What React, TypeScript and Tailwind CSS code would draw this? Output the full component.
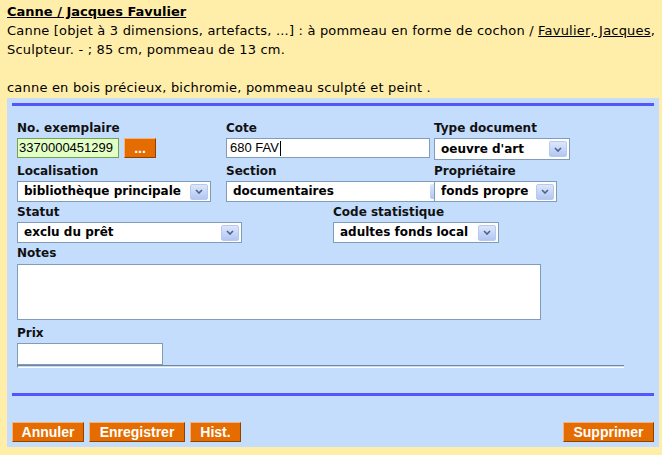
import React from 'react';

function Chevron() {
    return (
        <svg width="8" height="5" viewBox="0 0 8 5">
            <polyline points="1,1 4,4 7,1" fill="none" stroke="#4d6185" strokeWidth="1.6" />
        </svg>
    );
}

function ArrowBox() {
    return (
        <div className="w-[18px] h-[16px] rounded-[2px] border border-[#b9c9ee] bg-gradient-to-b from-[#dce7fd] to-[#b3c6f3] flex items-center justify-center">
            <Chevron />
        </div>
    );
}

function Select({ value, cls }: { value: string; cls: string }) {
    return (
        <div className={`${cls} bg-white border border-[#7f9db9] flex items-center justify-between pl-[6px] pr-[2px]`}>
            <span className="font-bold text-[12px] text-black whitespace-nowrap">{value}</span>
            <ArrowBox />
        </div>
    );
}

function Label({ children, cls = 'h-[20px] leading-[20px]' }: { children: React.ReactNode; cls?: string }) {
    return <div className={`${cls} font-bold text-[12px] text-[#111] whitespace-nowrap`}>{children}</div>;
}

function OrangeButton({ children, cls }: { children: React.ReactNode; cls: string }) {
    return (
        <button className={`${cls} h-[20px] bg-[#e46c00] border border-t-[#f5b27a] border-l-[#f5b27a] border-b-[#8c4200] border-r-[#8c4200] text-white font-bold text-[14px] leading-[18px] font-['Liberation_Sans',Arial,sans-serif] flex items-center justify-center`}>
            {children}
        </button>
    );
}

export default function App() {
    return (
        <div className="w-[662px] h-[455px] bg-[#ffeeaa] px-[7px] pt-[3px] font-['DejaVu_Sans',Verdana,sans-serif] text-[12px] leading-[19px] text-black overflow-hidden">
            {/* Notice */}
            <div className="whitespace-nowrap text-[13px] tracking-[0.2px] -mt-[1px]">
                <div className="font-bold underline tracking-normal">Canne / Jacques Favulier</div>
                <div>Canne [objet à 3 dimensions, artefacts, ...] : à pommeau en forme de cochon / <span className="underline">Favulier, Jacques</span>,</div>
                <div>Sculpteur. - ; 85 cm, pommeau de 13 cm.</div>
                <div className="h-[19px]"></div>
                <div>canne en bois précieux, bichromie, pommeau sculpté et peint .</div>
            </div>

            {/* Form panel */}
            <div className="w-[652px] h-[349px] bg-[#c5ddfd] pt-[5px] px-[5px] mt-[1px]">
                <div className="h-[3px] bg-[#5555ff]"></div>

                <div className="px-[5px] pt-[12px]">
                    {/* Row 1 */}
                    <div className="flex">
                        <div className="w-[209px]">
                            <Label>No. exemplaire</Label>
                            <div className="flex gap-[5px]">
                                <div className="w-[102px] h-[20px] bg-[#e2ffc6] border border-[#77a050] text-[13px] leading-[18px] pl-[1px] font-['Liberation_Sans',Arial,sans-serif]">3370000451299</div>
                                <OrangeButton cls="w-[32px] h-[19px] text-[11px]">...</OrangeButton>
                            </div>
                        </div>
                        <div className="w-[208px]">
                            <Label>Cote</Label>
                            <div className="w-[204px] h-[20px] bg-white border border-[#7f9db9] text-[13px] leading-[18px] pl-[3px] font-['Liberation_Sans',Arial,sans-serif] flex items-center">
                                680 FAV<span className="inline-block w-[1px] h-[15px] bg-black ml-[1px]"></span>
                            </div>
                        </div>
                        <div>
                            <Label>Type document</Label>
                            <Select value="oeuvre d'art" cls="w-[136px] h-[22px]" />
                        </div>
                    </div>

                    {/* Row 2 */}
                    <div className="flex mt-[1px]">
                        <div className="w-[209px]">
                            <Label>Localisation</Label>
                            <Select value="bibliothèque principale" cls="w-[194px] h-[21px]" />
                        </div>
                        <div className="w-[208px]">
                            <Label>Section</Label>
                            <div className="w-[208px] h-[21px] bg-white border border-r-0 border-[#7f9db9] flex items-center justify-between pl-[6px]">
                                <span className="font-bold text-[12px]">documentaires</span>
                                <div className="w-[4px] h-[15px] rounded-l-[2px] bg-gradient-to-b from-[#dce7fd] to-[#b3c6f3]"></div>
                            </div>
                        </div>
                        <div>
                            <Label>Propriétaire</Label>
                            <Select value="fonds propre" cls="w-[123px] h-[21px]" />
                        </div>
                    </div>

                    {/* Row 3 */}
                    <div className="flex">
                        <div className="w-[316px]">
                            <Label>Statut</Label>
                            <Select value="exclu du prêt" cls="w-[225px] h-[21px]" />
                        </div>
                        <div>
                            <Label>Code statistique</Label>
                            <Select value="adultes fonds local" cls="w-[166px] h-[21px]" />
                        </div>
                    </div>

                    {/* Notes */}
                    <Label cls="h-[21px] leading-[21px]">Notes</Label>
                    <div className="w-[524px] h-[56px] bg-white border border-[#7f9db9]"></div>

                    {/* Prix */}
                    <Label cls="h-[23px] leading-[27px]">Prix</Label>
                    <div className="w-[146px] h-[22px] bg-white border border-[#7f9db9]"></div>
                    <div className="w-[607px] h-[3px] border-t border-l border-[#6f87a0] border-b border-b-white"></div>
                </div>

                <div className="h-[3px] bg-[#5555ff] mt-[25px]"></div>

                {/* Actions */}
                <div className="flex justify-between mt-[26px]">
                    <div className="flex gap-[5px]">
                        <OrangeButton cls="w-[72px]">Annuler</OrangeButton>
                        <OrangeButton cls="w-[96px]">Enregistrer</OrangeButton>
                        <OrangeButton cls="w-[51px]">Hist.</OrangeButton>
                    </div>
                    <OrangeButton cls="w-[91px]">Supprimer</OrangeButton>
                </div>
            </div>
        </div>
    );
}
